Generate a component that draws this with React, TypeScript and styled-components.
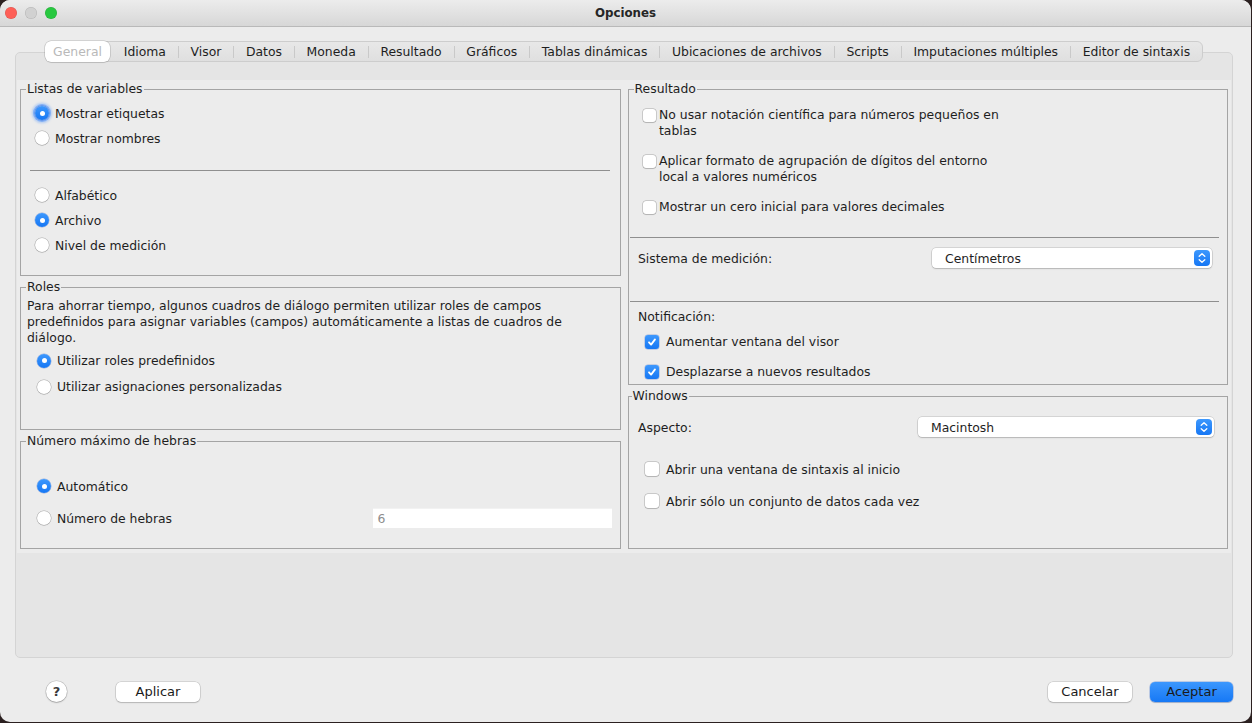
import React from "react";
import styled, { createGlobalStyle } from "styled-components";

const Global = createGlobalStyle`
  html, body { margin: 0; padding: 0; background: #2b2020; }
  body {
    font-family: "DejaVu Sans", Verdana, sans-serif;
    font-size: 12.4px;
    color: #1e1e1e;
  }
  * { box-sizing: border-box; }
`;

const Window = styled.div`
  width: 1251px;
  height: 722px;
  background: #ececec;
  border-radius: 10px;
  overflow: hidden;
  display: flex;
  flex-direction: column;
`;

const TitleBar = styled.div`
  height: 27px;
  flex: none;
  display: grid;
  grid-template-columns: 1fr auto 1fr;
  align-items: center;
  padding: 0 5px;
  background: linear-gradient(#ececec, #d7d7d7);
  border-bottom: 1px solid #b9b9b9;
`;

const Lights = styled.div`
  display: flex;
  gap: 8px;
`;

const Light = styled.span<{ $c: string }>`
  width: 12px;
  height: 12px;
  border-radius: 50%;
  background: ${(p) => p.$c};
  box-shadow: inset 0 0 0 0.5px rgba(0, 0, 0, 0.15);
`;

const Title = styled.div`
  font-weight: bold;
  font-size: 11.8px;
  color: #262626;
`;

const Main = styled.div`
  padding: 14px 18px 0 15px;
  display: flex;
  flex-direction: column;
`;

const TabRow = styled.div`
  display: flex;
  justify-content: center;
  height: 21px;
  margin-bottom: -10px;
  position: relative;
  z-index: 1;
`;

const TabBar = styled.div`
  display: flex;
  align-items: center;
  height: 21px;
  background: linear-gradient(#e8e8e8, #dfdfdf);
  border: 1px solid #cdcdcd;
  border-radius: 6px;
`;

const Tab = styled.div<{ $sel?: boolean }>`
  height: ${(p) => (p.$sel ? "21px" : "100%")};
  margin: ${(p) => (p.$sel ? "0 2px 0 -1px" : "0")};
  padding: 0 ${(p) => (p.$sel ? "8px" : "11.8px")};
  display: flex;
  align-items: center;
  white-space: nowrap;
  color: ${(p) => (p.$sel ? "#b9b9b9" : "#1e1e1e")};
  background: ${(p) => (p.$sel ? "#fff" : "transparent")};
  border-radius: 6px;
  box-shadow: ${(p) =>
    p.$sel ? "0 0 0 0.5px rgba(0,0,0,0.22), 0 1px 1px rgba(0,0,0,0.08)" : "none"};
`;

const TabSep = styled.span`
  width: 1px;
  height: 12px;
  background: #c9c9c9;
`;

const Panel = styled.div`
  height: 606px;
  background: #e5e5e5;
  border: 1px solid #d4d4d4;
  border-radius: 5px;
  padding: 27px 1px 0 1px;
`;

const Content = styled.div`
  background: #ececec;
  display: grid;
  grid-template-columns: 1fr 1fr;
  column-gap: 7px;
  padding: 2px 3px 4px 3px;
`;

const Column = styled.div`
  display: flex;
  flex-direction: column;
  gap: 4px;
`;

const Group = styled.fieldset<{ $h: number }>`
  margin: 0;
  padding: 0;
  min-width: 0;
  height: ${(p) => p.$h}px;
  border: 1px solid #a4a4a4;
`;

const Legend = styled.legend<{ $ml?: number }>`
  margin-left: ${(p) => p.$ml ?? 5}px;
  padding: 0 1px;
  line-height: 14px;
  font-size: 12.4px;
  color: #1e1e1e;
`;

const Body = styled.div<{ $pt: number; $pl: number; $pr?: number }>`
  padding: ${(p) => `${p.$pt}px ${p.$pr ?? 0}px 0 ${p.$pl}px`};
  display: flex;
  flex-direction: column;
`;

const Row = styled.div<{ $h: number; $gap?: number; $mt?: number }>`
  display: flex;
  align-items: center;
  height: ${(p) => p.$h}px;
  gap: ${(p) => p.$gap ?? 6}px;
  margin-top: ${(p) => p.$mt ?? 0}px;
  white-space: nowrap;
`;

const RadioDot = styled.span<{ $on?: boolean; $focus?: boolean }>`
  flex: none;
  width: 14px;
  height: 14px;
  border-radius: 50%;
  display: flex;
  align-items: center;
  justify-content: center;
  background: ${(p) => (p.$on ? "linear-gradient(#3d98fd, #1677f4)" : "#fff")};
  box-shadow: ${(p) =>
    p.$on
      ? p.$focus
        ? "0 0 0 0.5px rgba(0,60,180,0.4), 0 0 0 2px rgba(80,145,250,0.55), 0 0 2px 3.5px rgba(100,160,250,0.35)"
        : "0 0 0 0.5px rgba(0,60,180,0.35)"
      : "0 0 0 0.5px rgba(0,0,0,0.28), 0 0.5px 1px rgba(0,0,0,0.15)"};
  &::after {
    content: "";
    display: ${(p) => (p.$on ? "block" : "none")};
    width: 5px;
    height: 5px;
    border-radius: 50%;
    background: #fff;
  }
`;

const Box = styled.span<{ $on?: boolean; $size?: number }>`
  flex: none;
  width: ${(p) => p.$size ?? 13}px;
  height: ${(p) => p.$size ?? 13}px;
  border-radius: 3px;
  display: flex;
  align-items: center;
  justify-content: center;
  background: ${(p) => (p.$on ? "linear-gradient(#3d98fd, #1677f4)" : "#fff")};
  box-shadow: ${(p) =>
    p.$on
      ? "0 0 0 0.5px rgba(0,60,180,0.35)"
      : "0 0 0 0.5px rgba(0,0,0,0.28), 0 0.5px 1px rgba(0,0,0,0.12)"};
`;

const Sep = styled.div<{ $mt: number; $mb?: number; $ml?: number; $mr?: number }>`
  height: 1px;
  background: #8f8f8f;
  margin: ${(p) => `${p.$mt}px ${p.$mr ?? 0}px ${p.$mb ?? 0}px ${p.$ml ?? 0}px`};
`;

const Para = styled.div`
  line-height: 16px;
  white-space: nowrap;
`;

const Field = styled.div`
  width: 239px;
  height: 20px;
  background: #fff;
  color: #8d8d8d;
  padding-left: 5px;
  display: flex;
  align-items: center;
  box-shadow: inset 0 1px 0 #f2f2f2;
`;

const Spacer = styled.span`
  flex: 1;
`;

const CheckItem = styled.div<{ $mt?: number }>`
  display: flex;
  align-items: flex-start;
  gap: 3px;
  margin-top: ${(p) => p.$mt ?? 0}px;
  line-height: 16px;
  white-space: nowrap;
  & > span:first-child {
    margin-top: 2px;
  }
`;

const Label = styled.div<{ $mt?: number }>`
  line-height: 16px;
  margin-top: ${(p) => p.$mt ?? 0}px;
`;

const SelectBox = styled.div<{ $w: number }>`
  width: ${(p) => p.$w}px;
  height: 20px;
  background: #fff;
  border-radius: 4px;
  box-shadow: 0 0 0 0.5px rgba(0, 0, 0, 0.2), 0 1px 1.5px rgba(0, 0, 0, 0.15);
  display: flex;
  align-items: center;
  padding: 0 2px 0 13px;
`;

const BottomBar = styled.div`
  flex: 1;
  display: flex;
  align-items: center;
  padding: 3px 18px 0 46px;
`;

const Help = styled.div`
  width: 21px;
  height: 21px;
  border-radius: 50%;
  background: #fff;
  box-shadow: 0 0 0 0.5px rgba(0, 0, 0, 0.2), 0 1px 1.5px rgba(0, 0, 0, 0.2);
  display: flex;
  align-items: center;
  justify-content: center;
  font-size: 13px;
  font-weight: bold;
  color: #3a3a3a;
  margin-right: 49px;
`;

const Button = styled.div<{ $primary?: boolean; $w: number; $ml?: number }>`
  width: ${(p) => p.$w}px;
  height: 20px;
  margin-left: ${(p) => p.$ml ?? 0}px;
  border-radius: 5px;
  background: ${(p) => (p.$primary ? "linear-gradient(#3c97fd, #1678f5)" : "#fff")};
  box-shadow: ${(p) =>
    p.$primary
      ? "0 0 0 0.5px rgba(0,70,200,0.4), 0 1px 1px rgba(0,0,0,0.15)"
      : "0 0 0 0.5px rgba(0,0,0,0.2), 0 1px 1.5px rgba(0,0,0,0.15)"};
  display: flex;
  align-items: center;
  justify-content: center;
  font-size: 13px;
  color: #1a1a1a;
`;

const Check = () => (
  <svg width="10" height="10" viewBox="0 0 10 10">
    <path d="M2 5.3 L4.1 7.6 L8 2.4" fill="none" stroke="#fff" strokeWidth="1.8" strokeLinecap="round" strokeLinejoin="round" />
  </svg>
);

const Stepper = () => (
  <svg width="16" height="16" viewBox="0 0 16 16" style={{ marginLeft: "auto" }}>
    <defs>
      <linearGradient id="stg" x1="0" y1="0" x2="0" y2="1">
        <stop offset="0" stopColor="#3d98fd" />
        <stop offset="1" stopColor="#1677f4" />
      </linearGradient>
    </defs>
    <rect x="0" y="0" width="16" height="16" rx="4" fill="url(#stg)" />
    <path d="M5.2 6.3 L8 3.7 L10.8 6.3" fill="none" stroke="#fff" strokeWidth="1.3" strokeLinecap="round" strokeLinejoin="round" />
    <path d="M5.2 9.7 L8 12.3 L10.8 9.7" fill="none" stroke="#fff" strokeWidth="1.3" strokeLinecap="round" strokeLinejoin="round" />
  </svg>
);

const Radio = ({ on, focus, label, h = 25 }: { on?: boolean; focus?: boolean; label: string; h?: number }) => (
  <Row $h={h}>
    <RadioDot $on={on} $focus={focus} />
    <span>{label}</span>
  </Row>
);

const tabs = [
  "General",
  "Idioma",
  "Visor",
  "Datos",
  "Moneda",
  "Resultado",
  "Gráficos",
  "Tablas dinámicas",
  "Ubicaciones de archivos",
  "Scripts",
  "Imputaciones múltiples",
  "Editor de sintaxis",
];

export default function App() {
  const selected = 0;
  return (
    <>
      <Global />
      <Window>
        <TitleBar>
          <Lights>
            <Light $c="#fe5f57" />
            <Light $c="#d1d1d1" />
            <Light $c="#28c840" />
          </Lights>
          <Title>Opciones</Title>
          <span />
        </TitleBar>
        <Main>
          <TabRow>
            <TabBar>
              {tabs.map((t, i) => (
                <React.Fragment key={t}>
                  {i > 0 && i !== selected && i - 1 !== selected && <TabSep />}
                  <Tab $sel={i === selected}>{t}</Tab>
                </React.Fragment>
              ))}
            </TabBar>
          </TabRow>
          <Panel>
            <Content>
              <Column>
                <Group $h={194}>
                  <Legend>Listas de variables</Legend>
                  <Body $pt={4.5} $pl={14} $pr={10}>
                    <Radio on focus label="Mostrar etiquetas" />
                    <Radio label="Mostrar nombres" />
                    <Sep $mt={19.5} $mb={11.5} $ml={-5} />
                    <Radio label="Alfabético" />
                    <Radio on label="Archivo" />
                    <Radio label="Nivel de medición" />
                  </Body>
                </Group>
                <Group $h={150}>
                  <Legend>Roles</Legend>
                  <Body $pt={4} $pl={6}>
                    <Para>
                      Para ahorrar tiempo, algunos cuadros de diálogo permiten utilizar roles de campos
                      <br />
                      predefinidos para asignar variables (campos) automáticamente a listas de cuadros de
                      <br />
                      diálogo.
                    </Para>
                  </Body>
                  <Body $pt={1.5} $pl={16}>
                    <Radio on h={26} label="Utilizar roles predefinidos" />
                    <Radio h={26} label="Utilizar asignaciones personalizadas" />
                  </Body>
                </Group>
                <Group $h={115}>
                  <Legend>Número máximo de hebras</Legend>
                  <Body $pt={25} $pl={16} $pr={8}>
                    <Radio on h={26} label="Automático" />
                    <Row $h={26} $mt={6}>
                      <RadioDot />
                      <span>Número de hebras</span>
                      <Spacer />
                      <Field>6</Field>
                    </Row>
                  </Body>
                </Group>
              </Column>
              <Column>
                <Group $h={303}>
                  <Legend>Resultado</Legend>
                  <Body $pt={10.5} $pl={14.5}>
                    <CheckItem>
                      <Box />
                      <span>
                        No usar notación científica para números pequeños en
                        <br />
                        tablas
                      </span>
                    </CheckItem>
                    <CheckItem $mt={14}>
                      <Box />
                      <span>
                        Aplicar formato de agrupación de dígitos del entorno
                        <br />
                        local a valores numéricos
                      </span>
                    </CheckItem>
                    <CheckItem $mt={14}>
                      <Box />
                      <span>Mostrar un cero inicial para valores decimales</span>
                    </CheckItem>
                  </Body>
                  <Sep $mt={22.5} $ml={1.5} $mr={8} />
                  <Body $pt={10} $pl={9.5} $pr={15}>
                    <Row $h={20}>
                      <span>Sistema de medición:</span>
                      <Spacer />
                      <SelectBox $w={280}>
                        <span>Centímetros</span>
                        <Stepper />
                      </SelectBox>
                    </Row>
                  </Body>
                  <Sep $mt={32.5} $ml={1.5} $mr={8} />
                  <Body $pt={7} $pl={9.5}>
                    <Label>Notificación:</Label>
                  </Body>
                  <Body $pt={5} $pl={16.5}>
                    <Row $h={24} $gap={7}>
                      <Box $on $size={14}>
                        <Check />
                      </Box>
                      <span>Aumentar ventana del visor</span>
                    </Row>
                    <Row $h={24} $gap={7} $mt={6}>
                      <Box $on $size={14}>
                        <Check />
                      </Box>
                      <span>Desplazarse a nuevos resultados</span>
                    </Row>
                  </Body>
                </Group>
                <Group $h={160}>
                  <Legend $ml={3}>Windows</Legend>
                  <Body $pt={14} $pl={9.5} $pr={13}>
                    <Row $h={20}>
                      <span>Aspecto:</span>
                      <Spacer />
                      <SelectBox $w={296}>
                        <span>Macintosh</span>
                        <Stepper />
                      </SelectBox>
                    </Row>
                  </Body>
                  <Body $pt={20} $pl={16.5}>
                    <Row $h={24} $gap={7}>
                      <Box $size={14} />
                      <span>Abrir una ventana de sintaxis al inicio</span>
                    </Row>
                    <Row $h={24} $gap={7} $mt={8}>
                      <Box $size={14} />
                      <span>Abrir sólo un conjunto de datos cada vez</span>
                    </Row>
                  </Body>
                </Group>
              </Column>
            </Content>
          </Panel>
        </Main>
        <BottomBar>
          <Help>?</Help>
          <Button $w={84}>Aplicar</Button>
          <Spacer />
          <Button $w={84}>Cancelar</Button>
          <Button $w={83} $ml={18} $primary>
            Aceptar
          </Button>
        </BottomBar>
      </Window>
    </>
  );
}
